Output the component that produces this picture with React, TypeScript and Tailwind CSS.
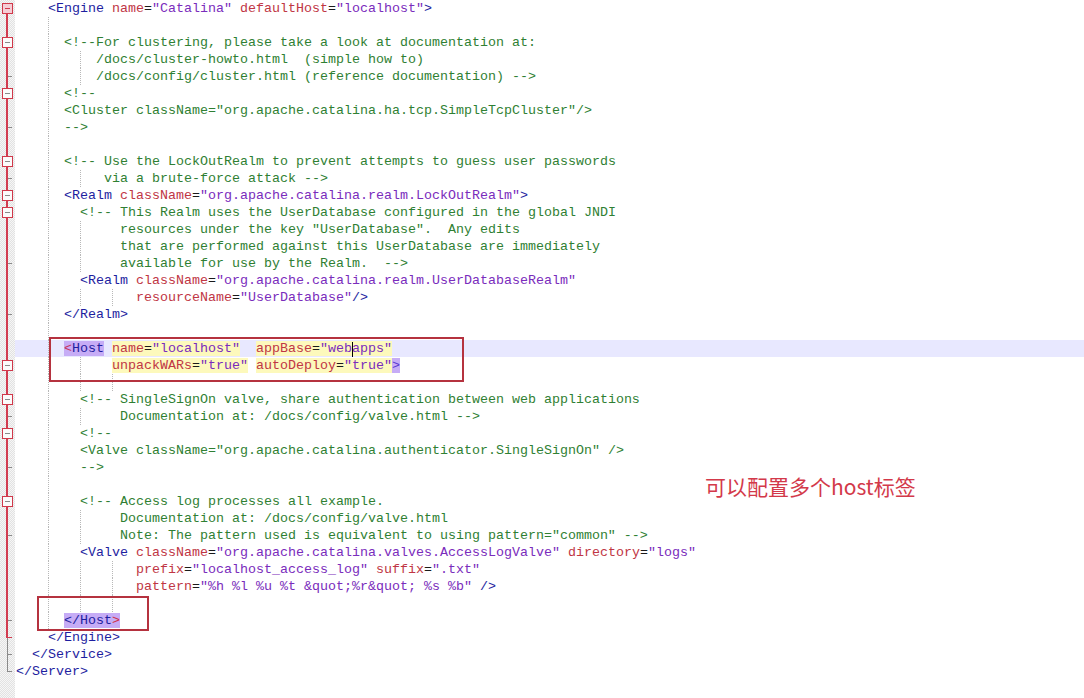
import React from 'react';

type Seg = { t: string; c: string; bg?: string; caret?: boolean };
type Fold = 'topbox' | 'box' | 'line' | 'end' | 'redcorner' | 'grayend' | 'graycorner';
type Row = { col: number; text?: string; comment?: boolean; segs?: Seg[]; guides: number[]; fold: Fold; current?: boolean };

const TAG = 'text-[#1e1ea0]';
const ATTR = 'text-[#c03644]';
const VAL = 'text-[#7a2cbc]';
const PLAIN = 'text-[#1a1a1a]';
const COMMENT = 'text-[#2f7f33]';
const MATCH = 'bg-[#c6acf6]';
const ATTRBG = 'bg-[#fdf9bc]';

const tokenize = (s: string): Seg[] => {
  const out: Seg[] = [];
  const re = /(<\/?[A-Za-z]+)|(\/?>)|([A-Za-z]+)(?==)|(=)|("[^"]*"?)|(\s+)|(\S)/g;
  let m: RegExpExecArray | null;
  while ((m = re.exec(s))) {
    if (m[1] || m[2]) out.push({ t: m[0], c: TAG });
    else if (m[3]) out.push({ t: m[0], c: ATTR });
    else if (m[5]) out.push({ t: m[0], c: VAL });
    else out.push({ t: m[0], c: PLAIN });
  }
  return out;
};

const rows: Row[] = [
  { col: 4, text: '<Engine name="Catalina" defaultHost="localhost">', guides: [], fold: 'topbox' },
  { col: 0, guides: [4], fold: 'line' },
  { col: 6, text: '<!--For clustering, please take a look at documentation at:', comment: true, guides: [4], fold: 'box' },
  { col: 10, text: '/docs/cluster-howto.html  (simple how to)', comment: true, guides: [4, 8], fold: 'line' },
  { col: 10, text: '/docs/config/cluster.html (reference documentation) -->', comment: true, guides: [4, 8], fold: 'end' },
  { col: 6, text: '<!--', comment: true, guides: [4], fold: 'box' },
  { col: 6, text: '<Cluster className="org.apache.catalina.ha.tcp.SimpleTcpCluster"/>', comment: true, guides: [4], fold: 'line' },
  { col: 6, text: '-->', comment: true, guides: [4], fold: 'end' },
  { col: 0, guides: [4], fold: 'line' },
  { col: 6, text: '<!-- Use the LockOutRealm to prevent attempts to guess user passwords', comment: true, guides: [4], fold: 'box' },
  { col: 11, text: 'via a brute-force attack -->', comment: true, guides: [4, 8], fold: 'end' },
  { col: 6, text: '<Realm className="org.apache.catalina.realm.LockOutRealm">', guides: [4], fold: 'box' },
  { col: 8, text: '<!-- This Realm uses the UserDatabase configured in the global JNDI', comment: true, guides: [4], fold: 'box' },
  { col: 13, text: 'resources under the key "UserDatabase".  Any edits', comment: true, guides: [4, 8], fold: 'line' },
  { col: 13, text: 'that are performed against this UserDatabase are immediately', comment: true, guides: [4, 8], fold: 'line' },
  { col: 13, text: 'available for use by the Realm.  -->', comment: true, guides: [4, 8], fold: 'end' },
  { col: 8, text: '<Realm className="org.apache.catalina.realm.UserDatabaseRealm"', guides: [4], fold: 'line' },
  { col: 15, text: 'resourceName="UserDatabase"/>', guides: [4, 8, 12], fold: 'line' },
  { col: 6, text: '</Realm>', guides: [4], fold: 'end' },
  { col: 0, guides: [4], fold: 'line' },
  {
    col: 6,
    guides: [4],
    fold: 'line',
    current: true,
    segs: [
      { t: '<', c: 'text-[#c8345c]', bg: MATCH },
      { t: 'Host', c: TAG, bg: MATCH },
      { t: ' ', c: PLAIN },
      { t: 'name', c: ATTR, bg: ATTRBG },
      { t: '=', c: PLAIN, bg: ATTRBG },
      { t: '"localhost"', c: VAL, bg: ATTRBG },
      { t: '  ', c: PLAIN },
      { t: 'appBase', c: ATTR, bg: ATTRBG },
      { t: '=', c: PLAIN, bg: ATTRBG },
      { t: '"web', c: VAL, bg: ATTRBG },
      { t: '', c: PLAIN, caret: true },
      { t: 'apps"', c: VAL, bg: ATTRBG },
    ],
  },
  {
    col: 12,
    guides: [4, 8],
    fold: 'box',
    segs: [
      { t: 'unpackWARs', c: ATTR, bg: ATTRBG },
      { t: '=', c: PLAIN, bg: ATTRBG },
      { t: '"true"', c: VAL, bg: ATTRBG },
      { t: ' ', c: PLAIN },
      { t: 'autoDeploy', c: ATTR, bg: ATTRBG },
      { t: '=', c: PLAIN, bg: ATTRBG },
      { t: '"true"', c: VAL, bg: ATTRBG },
      { t: '>', c: 'text-[#5a3ad0]', bg: MATCH },
    ],
  },
  { col: 0, guides: [4, 8, 12], fold: 'line' },
  { col: 8, text: '<!-- SingleSignOn valve, share authentication between web applications', comment: true, guides: [4], fold: 'box' },
  { col: 13, text: 'Documentation at: /docs/config/valve.html -->', comment: true, guides: [4, 8], fold: 'end' },
  { col: 8, text: '<!--', comment: true, guides: [4], fold: 'box' },
  { col: 8, text: '<Valve className="org.apache.catalina.authenticator.SingleSignOn" />', comment: true, guides: [4], fold: 'line' },
  { col: 8, text: '-->', comment: true, guides: [4], fold: 'end' },
  { col: 0, guides: [4], fold: 'line' },
  { col: 8, text: '<!-- Access log processes all example.', comment: true, guides: [4], fold: 'box' },
  { col: 13, text: 'Documentation at: /docs/config/valve.html', comment: true, guides: [4, 8], fold: 'line' },
  { col: 13, text: 'Note: The pattern used is equivalent to using pattern="common" -->', comment: true, guides: [4, 8], fold: 'end' },
  { col: 8, text: '<Valve className="org.apache.catalina.valves.AccessLogValve" directory="logs"', guides: [4], fold: 'line' },
  { col: 15, text: 'prefix="localhost_access_log" suffix=".txt"', guides: [4, 8, 12], fold: 'line' },
  { col: 15, text: 'pattern="%h %l %u %t &quot;%r&quot; %s %b" />', guides: [4, 8, 12], fold: 'line' },
  { col: 0, guides: [4, 8, 12], fold: 'line' },
  {
    col: 6,
    guides: [4],
    fold: 'end',
    segs: [
      { t: '</Host', c: TAG, bg: MATCH },
      { t: '>', c: 'text-[#d0304a]', bg: MATCH },
    ],
  },
  { col: 4, text: '</Engine>', guides: [], fold: 'redcorner' },
  { col: 2, text: '</Service>', guides: [], fold: 'grayend' },
  { col: 0, text: '</Server>', guides: [], fold: 'graycorner' },
];

const RED_STEM = 'w-[2px] bg-[#d23c50]';
const GRAY_STEM = 'ml-px w-px bg-[#8a8a8a]';

// fold margin cell: stem halves, end tick, and the [-] box
const FoldMark = ({ kind }: { kind: Fold }) => {
  const box = kind === 'topbox' || kind === 'box';
  const redFull = kind === 'box' || kind === 'line' || kind === 'end';
  const upper = kind === 'topbox' ? 'w-[2px]' : redFull || kind === 'redcorner' ? RED_STEM : GRAY_STEM;
  const lower = kind === 'graycorner' ? 'w-px' : kind === 'topbox' || redFull ? RED_STEM : GRAY_STEM;
  const tick = kind === 'end' || kind === 'grayend' || kind === 'graycorner' || kind === 'redcorner';
  return (
    <div className="flex h-[17px] w-[15px] flex-col items-start pl-[6px]">
      <div className={`h-[9px] shrink-0 ${upper}`} />
      <div className={`h-[8px] shrink-0 ${lower}`} />
      {tick && (
        <div
          className={`-mt-[9px] ml-[2px] h-px w-[4px] shrink-0 ${
            kind === 'redcorner' ? 'bg-[#d23c50]' : 'bg-[#8a8a8a]'
          }`}
        />
      )}
      {box && (
        <svg width="11" height="11" viewBox="0 0 11 11" className="-ml-[4px] -mt-[14px] block shrink-0" shapeRendering="crispEdges">
          <rect x="0.5" y="0.5" width="10" height="10" fill={kind === 'topbox' ? '#f5cdd5' : '#fbfbfb'} stroke="#d0384a" />
          <rect x="3" y="5" width="5" height="1" fill={kind === 'topbox' ? '#d0384a' : '#8a8a8a'} />
        </svg>
      )}
    </div>
  );
};

const guideLeft: Record<number, string> = {
  4: 'left-[33px]',
  8: 'left-[65px]',
  12: 'left-[97px]',
};

const CodeLine = ({ row }: { row: Row }) => {
  const segs: Seg[] = row.segs
    ? row.segs
    : row.text === undefined
    ? []
    : row.comment
    ? [{ t: row.text, c: COMMENT }]
    : tokenize(row.text);
  return (
    <div className={`relative h-[17px] leading-[17px] whitespace-pre pl-px ${row.current ? 'bg-[#e8e8ff]' : ''}`}>
      {row.guides.map((g) => (
        <span key={g} className={`absolute top-0 bottom-0 ${guideLeft[g]} border-l border-dotted border-[#b8b8b8]`} />
      ))}
      <span className="relative">
        {' '.repeat(row.col)}
        {segs.map((s, i) =>
          s.caret ? (
            <span key={i} className="relative">
              <span className="absolute left-0 top-[1px] h-[15px] w-px bg-black" />
            </span>
          ) : (
            <span key={i} className={`${s.c} ${s.bg ?? ''}`}>
              {s.t}
            </span>
          )
        )}
      </span>
    </div>
  );
};

export default function App() {
  return (
    <div className="relative flex h-[698px] w-[1084px] overflow-hidden bg-white font-['Liberation_Mono','Courier_New',monospace] text-[13.333px]">
      <div className="w-[15px] shrink-0 bg-[image:repeating-conic-gradient(#e2e2e2_0%_25%,#f6f6f6_0%_50%)] bg-[length:2px_2px]">
        {rows.map((r, i) => (
          <FoldMark key={i} kind={r.fold} />
        ))}
      </div>
      <div className="flex-1">
        {rows.map((r, i) => (
          <CodeLine key={i} row={r} />
        ))}
      </div>

      <div className="pointer-events-none absolute left-[49px] top-[337px] h-[45px] w-[415px] border-2 border-[#b5323f]" />
      <div className="pointer-events-none absolute left-[37px] top-[596px] h-[35px] w-[112px] border-2 border-[#b5323f]" />

      <div className="absolute left-[705px] top-[474px] text-[21px] leading-[24px] text-[#d3394a] font-['Noto_Sans_CJK_SC','Noto_Sans',sans-serif]">
        可以配置多个host标签
      </div>
    </div>
  );
}
